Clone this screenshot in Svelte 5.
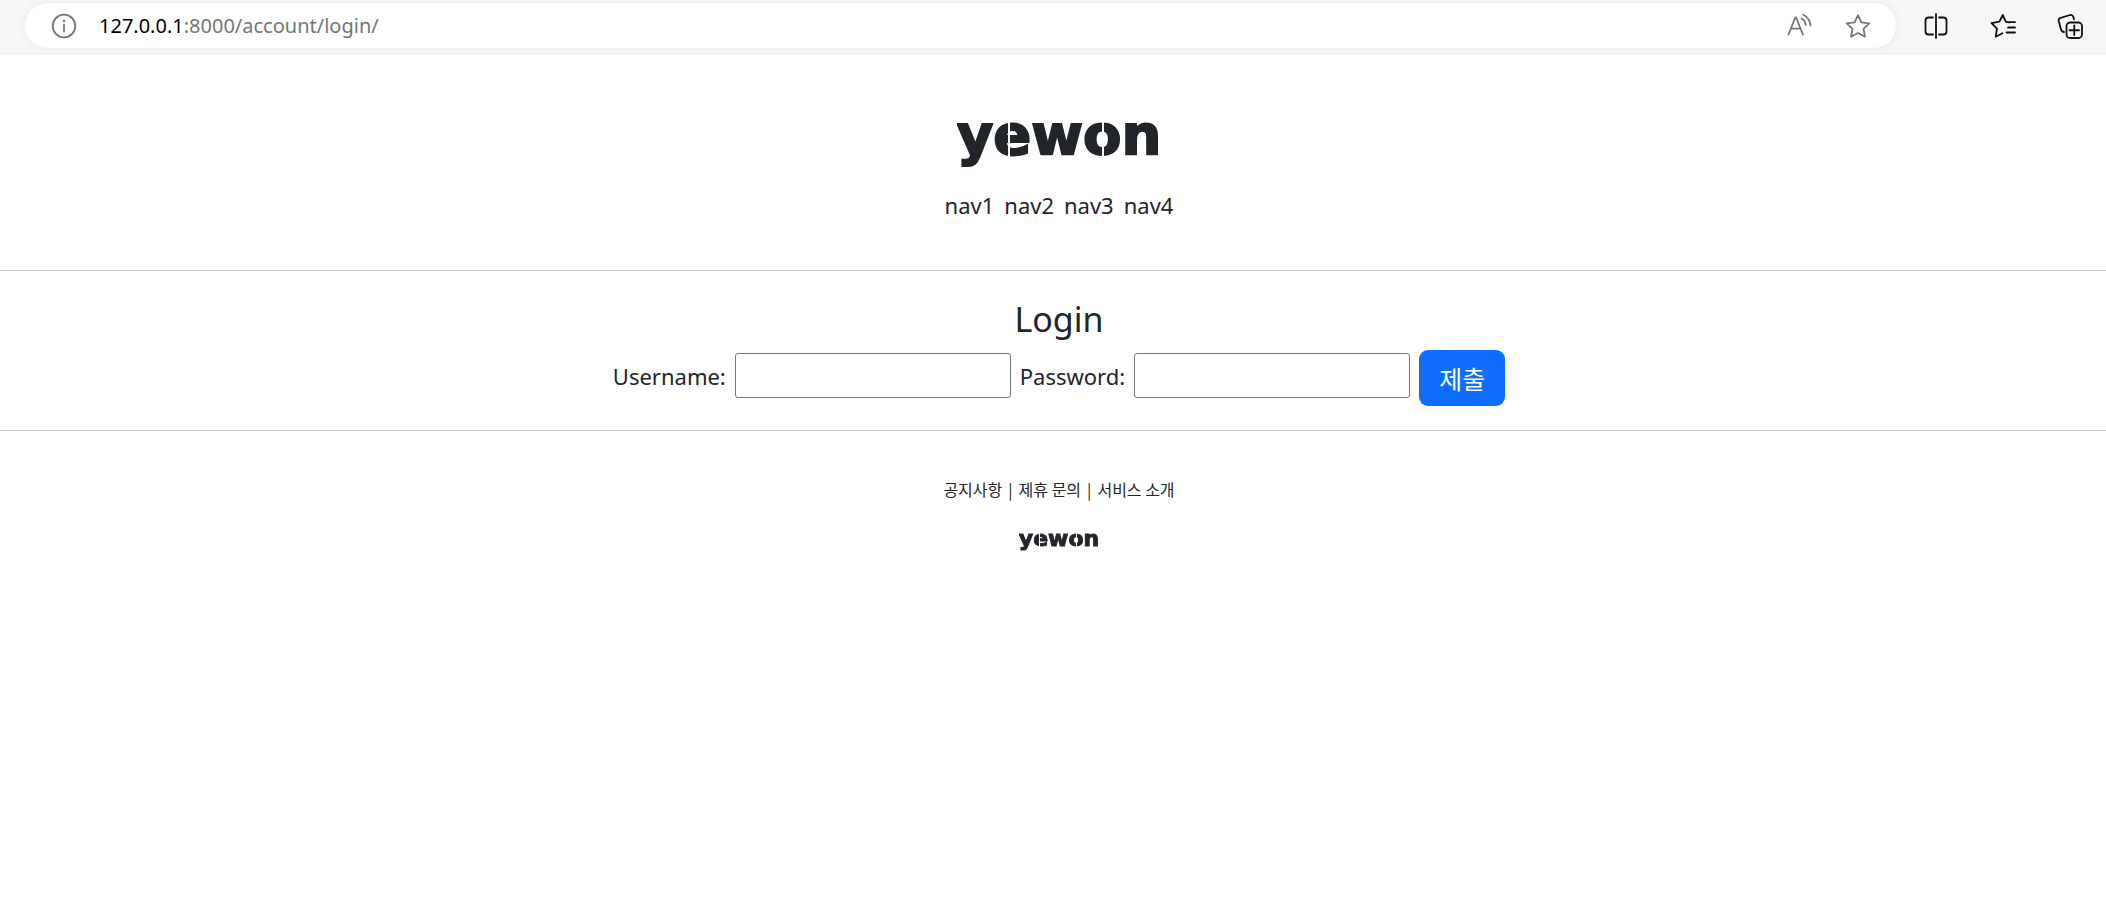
<script>
  const navItems = ['nav1', 'nav2', 'nav3', 'nav4'];
  const footerLinks = ['공지사항', '제휴 문의', '서비스 소개'];
  let username = $state('');
  let password = $state('');
</script>

<div class="toolbar">
  <div class="address">
    <button class="icon muted" aria-label="Site information">
      <svg viewBox="0 0 26 26"><circle cx="13" cy="13" r="11.3" /><path d="M13 11.5v7" /><circle class="dot" cx="13" cy="8" r="1.2" /></svg>
    </button>
    <span class="url"><b>127.0.0.1</b>:8000/account/login/</span>
    <button class="icon muted" aria-label="Read aloud">
      <svg viewBox="0 0 26 26"><path d="M2.5 21.5 9.3 4.500h.8l6.8 17M5 15.700h9.400M15.500 5.500q3.800 2.200 4.300 6.700M17.300 1.800q6.400 3.500 7.300 10.700" /></svg>
    </button>
    <button class="icon muted star" aria-label="Add to favorites">
      <svg viewBox="0 0 26 26"><path d="M13 2.200 16.300 9.300 24.300 10.300 18.500 15.800 20 23.700 13 20 6 23.700 7.500 15.800 1.700 10.300 9.700 9.300Z" /></svg>
    </button>
  </div>
  <div class="actions">
    <button class="icon" aria-label="Split screen">
      <svg viewBox="0 0 26 26"><path d="M13 1v24M10 4.500H5.500Q2.500 4.500 2.500 7.500v11Q2.500 21.500 5.500 21.500H10M16 4.500h4.500q3 0 3 3v11q0 3-3 3H16" /></svg>
    </button>
    <button class="icon" aria-label="Favorites">
      <svg viewBox="0 0 26 26"><path d="M19 9.500 15.800 8.700 12.700 2 9.500 8.700 1.500 10.200 7 15.700 5.700 23.700 12.500 20.200M16.500 9.200H25M18 14.500h7M16.500 19.500H25" /></svg>
    </button>
    <button class="icon" aria-label="Collections">
      <svg viewBox="0 0 26 26"><rect x="9.500" y="9.500" width="15.500" height="15.500" rx="3.500" /><path d="M17.250 12.500v9.500M12.500 17.250H22M17 6.300 16.300 3.800Q15.500 1.500 13.200 2L3.600 4.900Q1.200 5.700 1.700 8.100L4 16.500Q4.700 18.900 7 19" /></svg>
    </button>
  </div>
</div>

<div class="page">
  <header>
    <h1 class="logo">yewon</h1>
    <nav>
      {#each navItems as item}
        <a href="#{item}">{item}</a>
      {/each}
    </nav>
  </header>

  <main>
    <h2>Login</h2>
    <form onsubmit={(event) => event.preventDefault()}>
      <label for="username">Username:</label>
      <input id="username" type="text" bind:value={username} />
      <label for="password">Password:</label>
      <input id="password" type="password" bind:value={password} />
      <button class="submit" type="submit">제출</button>
    </form>
  </main>

  <footer>
    <div class="links">
      {#each footerLinks as link, i}
        {#if i > 0}<span>|</span>{/if}
        <a href="#footer-{i}">{link}</a>
      {/each}
    </div>
    <div class="logo small">yewon</div>
  </footer>
</div>

<style>
  :global(body) {
    margin: 0;
    background: #fff;
    color: #212529;
    font-family: "Noto Sans", "Noto Sans CJK KR", sans-serif;
    overflow-x: hidden;
  }

  .toolbar {
    display: flex;
    align-items: center;
    height: 53px;
    box-sizing: border-box;
    padding: 0 23px 2px 25px;
    background: #f7f7f7;
    box-shadow: 0 1px #e8e8e8;
  }

  .address {
    flex: 1;
    display: flex;
    align-items: center;
    height: 45px;
    box-sizing: border-box;
    padding: 0 25px 0 26px;
    border-radius: 23px;
    background: #fff;
    box-shadow: 0 0 8px #e8e8e8;
  }

  .url {
    flex: 1;
    margin-left: 22px;
    font-size: 20px;
    line-height: 28px;
    color: #767676;
  }

  .url b {
    font-weight: 400;
    color: #000;
  }

  .actions {
    display: flex;
    gap: 41px;
    margin-left: 27px;
  }

  .icon {
    display: block;
    width: 26px;
    height: 26px;
    padding: 0;
    border: 0;
    background: none;
    color: #111;
  }

  .icon.muted {
    color: #767676;
  }

  .star {
    margin-left: 33px;
  }

  .icon svg {
    display: block;
    width: 26px;
    height: 26px;
    fill: none;
    stroke: currentColor;
    stroke-width: 1.8;
    stroke-linecap: round;
    stroke-linejoin: round;
  }

  .icon .dot {
    fill: currentColor;
    stroke: none;
  }

  .page {
    padding-left: 12px;
    text-align: center;
    font-size: 22px;
    line-height: 36px;
  }

  header,
  main {
    margin-left: -12px;
    padding-left: 12px;
    border-bottom: 1px solid #c8c9ca;
  }

  header {
    padding-top: 46px;
    padding-bottom: 47px;
  }

  .logo {
    width: fit-content;
    margin: 0 auto;
    font-family: "DejaVu Sans", sans-serif;
    font-weight: 700;
    font-size: 56px;
    line-height: 72px;
    color: transparent;
    -webkit-text-stroke: 2px transparent;
    /* stencil cuts through the "e" and the "o" */
    background: linear-gradient(
      90deg,
      #212529 25%,
      #fff 25% 26%,
      #212529 26% 71%,
      #fff 71% 72%,
      #212529 72%
    );
    -webkit-background-clip: text;
    background-clip: text;
  }

  nav {
    display: flex;
    justify-content: center;
    gap: 10px;
    margin-top: 16px;
  }

  a {
    color: inherit;
    text-decoration: none;
  }

  main {
    padding-top: 25px;
    padding-bottom: 24px;
  }

  h2 {
    margin: 0 0 8px;
    font-size: 34px;
    font-weight: 400;
    line-height: 46px;
  }

  form {
    display: flex;
    justify-content: center;
    align-items: center;
    gap: 9px;
  }

  label {
    padding-bottom: 4px;
  }

  input {
    width: 276px;
    height: 45px;
    box-sizing: border-box;
    margin-bottom: 6px;
    padding: 1px 4px;
    border: 1px solid #767676;
    border-radius: 3px;
    background: #fff;
    font: inherit;
  }

  .submit {
    width: 86px;
    height: 56px;
    padding: 0;
    border: 0;
    border-radius: 9px;
    background: #0d6efd;
    color: #fff;
    font-family: "Noto Sans CJK KR", sans-serif;
    font-size: 25px;
  }

  footer {
    padding-top: 46px;
  }

  .links {
    display: flex;
    justify-content: center;
    gap: 6px;
    font-family: "Noto Sans CJK KR", sans-serif;
    font-size: 16px;
    line-height: 24px;
  }

  .small {
    margin-top: 22px;
    font-size: 22px;
    line-height: 32px;
    -webkit-text-stroke-width: 1px;
  }
</style>
